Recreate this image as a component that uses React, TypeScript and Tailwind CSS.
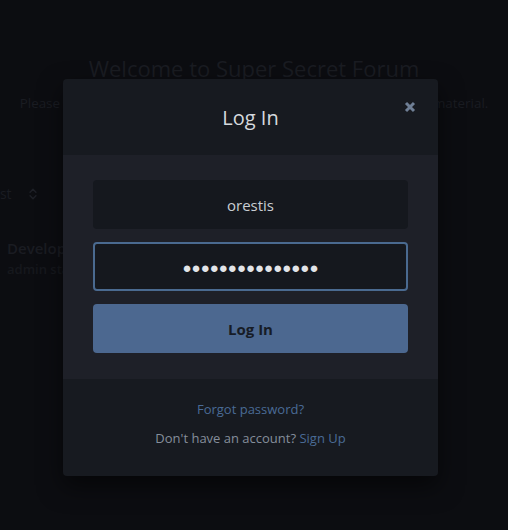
import { ChevronsUpDown } from 'lucide-react'

export default function App() {
  return (
    <div className="relative h-[530px] w-[508px] overflow-hidden bg-[#0c0d11] font-['Open_Sans',sans-serif]">
      <div className="flex flex-col">
        <div className="flex flex-col items-center pt-[53px]">
          <h1 className="text-[22px] leading-[30px] text-[#1a1c22]">Welcome to Super Secret Forum</h1>
          <p className="mt-[10px] whitespace-nowrap text-[13.4px] leading-[20px] text-[#1a1c22]">
            Please log in or sign up to see the discussions and all of the secret material.
          </p>
        </div>

        <div className="-ml-[28px] mt-[70px] flex items-center gap-[14px] text-[14px] text-[#1a1c22]">
          <span>Latest</span>
          <ChevronsUpDown size={14} strokeWidth={2.5} className="text-[#1e2027]" />
        </div>

        <div className="ml-[7px] mt-[34px] flex flex-col">
          <span className="whitespace-nowrap text-[15px] font-semibold leading-[20px] text-[#1a1c22]">Development updates</span>
          <span className="mt-[2px] whitespace-nowrap text-[13px] font-semibold leading-[18px] text-[#16181d]">admin started 2 days ago</span>
        </div>
      </div>

      {/* Modal */}
      <div className="absolute inset-0 pt-[79px] pl-[63px]">
        <div className="w-[375px] overflow-hidden rounded-[4px] bg-[#171a20] shadow-[0_10px_24px_rgba(0,0,0,0.55)]">
          <div className="relative flex h-[76px] items-center justify-center pt-[2px]">
            <h3 className="text-[20px] leading-[28px] text-[#d5d9de]">Log In</h3>
            <button className="absolute right-[20px] top-[20px] flex h-[16px] w-[16px] items-center justify-center text-[#6f7f95]">
              <svg width="12" height="12" viewBox="0 0 12 12">
                <path d="M2 2L10 10M10 2L2 10" stroke="currentColor" strokeWidth="3" strokeLinecap="butt" />
              </svg>
            </button>
          </div>

          <div className="flex flex-col gap-[13px] bg-[#1e2028] px-[30px] pt-[25px] pb-[26px]">
            <div className="flex h-[49px] items-center justify-center rounded-[4px] bg-[#15181e] pt-[2px] text-[15px] text-[#c9cdd3]">
              orestis
            </div>
            <div className="flex h-[49px] items-center justify-center rounded-[4px] border-2 border-[#4a6a90] bg-[#15181e] pt-[2px] text-[15px] text-[#e2e4e8]">
              ●●●●●●●●●●●●●●●
            </div>
            <button className="flex h-[49px] items-center justify-center rounded-[4px] bg-[#4c6890] pt-[2px] text-[15px] font-bold text-[#171c26]">
              Log In
            </button>
          </div>

          <div className="flex h-[97px] flex-col items-center pt-[21px] text-[13px] leading-[18px]">
            <a className="text-[#4a6b96]">Forgot password?</a>
            <p className="mt-[11px] text-[#858e9b]">
              Don't have an account? <a className="text-[#4a6b96]">Sign Up</a>
            </p>
          </div>
        </div>
      </div>
    </div>
  )
}
